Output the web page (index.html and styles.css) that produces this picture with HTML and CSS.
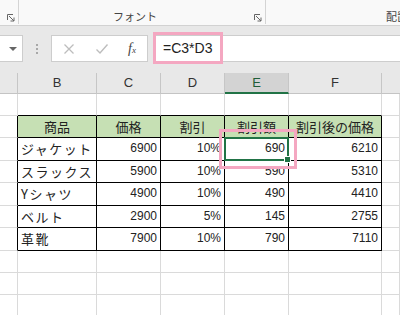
FILE: index.html
```html
<!DOCTYPE html>
<html lang="ja">
<head>
<meta charset="utf-8">
<link rel="stylesheet" href="styles.css">
</head>
<body>
<div class="ribbon">
  <div class="group g0">
    <svg class="launcher" width="8" height="8" viewBox="0 0 8 8"><path d="M0.5 6V0.5H6M2 2L7 7M7 3.5V7H3.5" fill="none" stroke="#666" stroke-width="1"/></svg>
  </div>
  <div class="group g1">
    <span class="glabel">フォント</span>
    <svg class="launcher" width="8" height="8" viewBox="0 0 8 8"><path d="M0.5 6V0.5H6M2 2L7 7M7 3.5V7H3.5" fill="none" stroke="#666" stroke-width="1"/></svg>
  </div>
  <div class="group g2">
    <span class="glabel">配置</span>
  </div>
</div>
<div class="fbar">
  <div class="namebox"><span class="dd"></span></div>
  <div class="dots"><i></i><i></i><i></i></div>
  <div class="funcbox">
    <svg width="12" height="12" viewBox="0 0 12 12"><path d="M1.5 1.5L10.5 10.5M10.5 1.5L1.5 10.5" stroke="#bdbdbd" stroke-width="1.3" fill="none"/></svg>
    <svg width="14" height="12" viewBox="0 0 14 12"><path d="M1.5 6.5L5 10L12.5 1.5" stroke="#bdbdbd" stroke-width="1.4" fill="none"/></svg>
    <span class="fx"><i>f</i><small>x</small></span>
  </div>
  <div class="finput">=C3*D3</div>
</div>
<div class="colhead">
  <div class="ch"></div>
  <div class="ch">B</div>
  <div class="ch">C</div>
  <div class="ch">D</div>
  <div class="ch sel">E</div>
  <div class="ch">F</div>
  <div class="ch last"></div>
</div>
<div class="sheet">
  <div class="c"></div><div class="c tt"></div><div class="c tt"></div><div class="c tt"></div><div class="c tt"></div><div class="c tt"></div><div class="c"></div>

  <div class="c tl"></div><div class="c t h">商品</div><div class="c t h">価格</div><div class="c t h">割引</div><div class="c t h">割引額</div><div class="c t h">割引後の価格</div><div class="c"></div>

  <div class="c tl"></div><div class="c t s">ジャケット</div><div class="c t n">6900</div><div class="c t n">10%</div><div class="c t n active">690</div><div class="c t n">6210</div><div class="c"></div>

  <div class="c tl"></div><div class="c t s">スラックス</div><div class="c t n">5900</div><div class="c t n">10%</div><div class="c t n">590</div><div class="c t n">5310</div><div class="c"></div>

  <div class="c tl"></div><div class="c t s">Yシャツ</div><div class="c t n">4900</div><div class="c t n">10%</div><div class="c t n">490</div><div class="c t n">4410</div><div class="c"></div>

  <div class="c tl"></div><div class="c t s">ベルト</div><div class="c t n">2900</div><div class="c t n">5%</div><div class="c t n">145</div><div class="c t n">2755</div><div class="c"></div>

  <div class="c tl"></div><div class="c t s">革靴</div><div class="c t n">7900</div><div class="c t n">10%</div><div class="c t n">790</div><div class="c t n">7110</div><div class="c"></div>

  <div class="c"></div><div class="c"></div><div class="c"></div><div class="c"></div><div class="c"></div><div class="c"></div><div class="c"></div>
  <div class="c"></div><div class="c"></div><div class="c"></div><div class="c"></div><div class="c"></div><div class="c"></div><div class="c"></div>
  <div class="c"></div><div class="c"></div><div class="c"></div><div class="c"></div><div class="c"></div><div class="c"></div><div class="c"></div>
</div>
<div class="mark mark-formula"></div>
<div class="mark mark-cell"></div>
</body>
</html>
```
FILE: styles.css
```css
* { box-sizing: border-box; }
html, body { margin: 0; padding: 0; }
body {
  width: 400px;
  height: 315px;
  overflow: hidden;
  background: #fff;
  position: relative;
  font-family: "Liberation Sans", "Noto Sans CJK JP", sans-serif;
  color: #222;
}

/* ribbon */
.ribbon {
  display: flex;
  height: 26px;
  background: #f9f9f9;
  border-bottom: 1px solid #d2d2d2;
}
.group {
  position: relative;
  height: 24px;
  display: flex;
  align-items: flex-end;
  border-right: 1px solid #d4d4d4;
}
.g0 { width: 19px; justify-content: flex-end; padding-right: 3px; padding-bottom: 2px; }
.g1 { width: 247px; justify-content: center; padding-right: 14px; padding-bottom: 1px; }
.g2 { flex: 1; min-width: 0; border-right: none; padding-left: 120px; padding-bottom: 1px; overflow: hidden; white-space: nowrap; }
.g1 .launcher { position: absolute; right: 3px; bottom: 2px; }
.glabel {
  font-family: "Noto Sans CJK JP", sans-serif;
  font-size: 11px;
  color: #444;
  line-height: 14px;
  white-space: nowrap;
}

/* formula bar */
.fbar {
  display: flex;
  align-items: flex-start;
  height: 47px;
  padding-top: 9px;
  background: #e8e8e8;
}
.namebox {
  width: 23px;
  height: 27px;
  background: #fff;
  border: 1px solid #cdcdcd;
  border-left: none;
  display: flex;
  align-items: center;
  justify-content: flex-end;
  padding-right: 5px;
}
.dd {
  width: 0; height: 0;
  border-left: 4px solid transparent;
  border-right: 4px solid transparent;
  border-top: 4px solid #666;
}
.dots {
  width: 28px;
  height: 27px;
  display: flex;
  flex-direction: column;
  align-items: center;
  justify-content: center;
  gap: 2px;
}
.dots i { width: 2px; height: 2px; background: #a8a8a8; display: block; }
.funcbox {
  width: 97px;
  height: 27px;
  background: #fff;
  border: 1px solid #cdcdcd;
  display: flex;
  align-items: center;
  justify-content: space-between;
  padding: 0 11px 0 11px;
}
.fx {
  font-family: "Liberation Serif", serif;
  font-size: 14px;
  color: #444;
}
.fx small { font-size: 9px; font-style: italic; }
.finput {
  flex: 1;
  height: 27px;
  margin-left: 5px;
  background: #fff;
  border: 1px solid #cdcdcd;
  border-right: none;
  font-size: 14px;
  line-height: 25px;
  padding-left: 9px;
  color: #222;
}

/* column header */
.colhead {
  display: grid;
  grid-template-columns: 18px 79px 64px 64px 64px 93px 18px;
  height: 21px;
  background: #e8e8e8;
  border-bottom: 1px solid #c4c4c4;
}
.ch {
  border-right: 1px solid #c6c6c6;
  font-size: 13px;
  color: #333;
  text-align: center;
  line-height: 20px;
}
.ch.last { border-right: none; }
.ch.sel {
  background: #d3d3d3;
  color: #1f5e38;
  border-bottom: 2px solid #217346;
  line-height: 19px;
}

/* sheet */
.sheet {
  display: grid;
  grid-template-columns: 18px 79px 64px 64px 64px 93px 18px;
  grid-template-rows: 22px 22px 23px 22px 23px 22px 23px 22px 22px 22px;
}
.c {
  border-right: 1px solid #dadada;
  border-bottom: 1px solid #dadada;
  font-size: 12px;
  line-height: 21px;
  white-space: nowrap;
  overflow: hidden;
}
.c.tt { border-bottom-color: #000; }
.c.tl { border-right-color: #000; }
.c.t { border-right-color: #000; border-bottom-color: #000; }
.c.h {
  background: #c6e0b4;
  text-align: center;
  font-family: "Noto Sans CJK JP", sans-serif;
  font-size: 13px;
  color: #222;
}
.c.s {
  font-family: "Noto Sans CJK JP", sans-serif;
  font-size: 13px;
  letter-spacing: 1.5px;
  padding-left: 3px;
  color: #222;
}
.c.n { text-align: right; padding-right: 3px; color: #222; }
.c.active { position: relative; overflow: visible; }
.c.active::before {
  content: "";
  position: absolute;
  left: -1px; top: -1px; right: -1px; bottom: -1px;
  border: 2px solid #217346;
}
.c.active::after {
  content: "";
  position: absolute;
  right: -3px; bottom: -3px;
  width: 5px; height: 5px;
  background: #217346;
  border: 1px solid #fff;
}

/* annotation marks */
.mark {
  position: absolute;
  border: 3px solid #f4a7c1;
}
.mark-formula { left: 153px; top: 32px; width: 70px; height: 32px; }
.mark-cell { left: 219px; top: 129px; width: 78px; height: 40px; }
```
